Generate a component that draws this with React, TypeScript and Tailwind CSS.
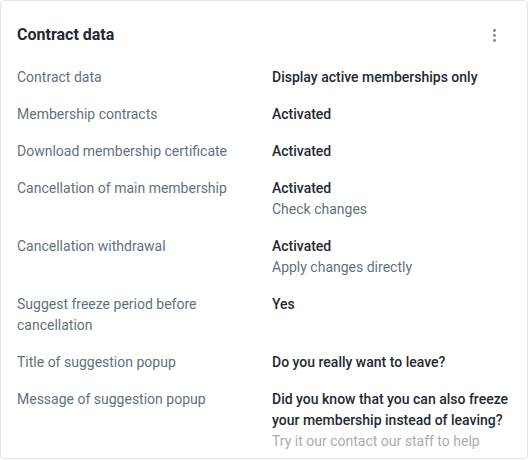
import React from 'react';
import { EllipsisVertical } from 'lucide-react';

type Row = {
  label: string;
  value: string;
  sub?: string;
  faded?: string;
};

const rows: Row[] = [
  { label: 'Contract data', value: 'Display active memberships only' },
  { label: 'Membership contracts', value: 'Activated' },
  { label: 'Download membership certificate', value: 'Activated' },
  { label: 'Cancellation of main membership', value: 'Activated', sub: 'Check changes' },
  { label: 'Cancellation withdrawal', value: 'Activated', sub: 'Apply changes directly' },
  { label: 'Suggest freeze period before cancellation', value: 'Yes' },
  { label: 'Title of suggestion popup', value: 'Do you really want to leave?' },
  {
    label: 'Message of suggestion popup',
    value: 'Did you know that you can also freeze your membership instead of leaving?',
    faded: 'Try it our contact our staff to help',
  },
];

const App: React.FC = () => {
  return (
    <div className="bg-white" style={{ fontFamily: 'Roboto, "Liberation Sans", sans-serif' }}>
      <div className="h-[459px] overflow-hidden rounded border border-[#e2e5e7] bg-white">
        <div className="flex items-center justify-between pl-[16px] pr-[24px] pt-[22px]">
          <h2 className="text-[16px] font-bold leading-6 text-[#1f2a33]">Contract data</h2>
          <button className="text-[#80878c]">
            <EllipsisVertical size={17} strokeWidth={2.2} />
          </button>
        </div>

        <div className="mt-[20px] flex flex-col gap-4 pl-[16px] pr-[8px] text-[14px] leading-[21px]">
          {rows.map((row) => (
            <div key={row.label} className="grid grid-cols-[255px_1fr]">
              <div className="pr-6 text-[#5f727d]">{row.label}</div>
              <div>
                <div className="font-medium text-[#1f2a33]">{row.value}</div>
                {row.sub && <div className="text-[#5f727d]">{row.sub}</div>}
                {row.faded && <div className="text-[#a6adb2]">{row.faded}</div>}
              </div>
            </div>
          ))}
        </div>
      </div>
    </div>
  );
};

export default App;
